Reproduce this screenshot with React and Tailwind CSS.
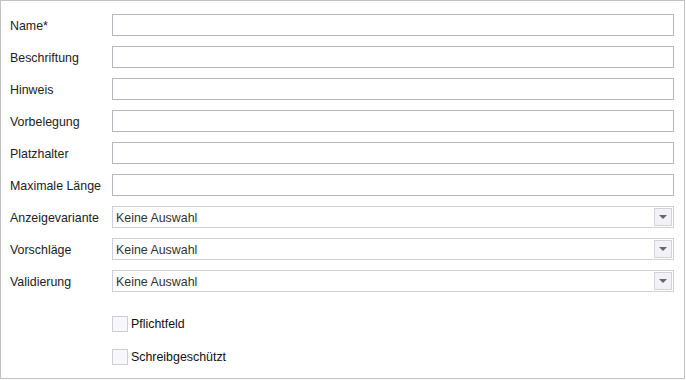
import React from 'react';

const textFields = ['Name*', 'Beschriftung', 'Hinweis', 'Vorbelegung', 'Platzhalter', 'Maximale Länge'];
const selectFields = ['Anzeigevariante', 'Vorschläge', 'Validierung'];

function Row({ label, children }) {
  return (
    <div className="flex items-center h-[22px] mb-[10px]">
      <label className="w-[102px] shrink-0 h-[22px] leading-[24px] text-[12.4px] text-[#222]">{label}</label>
      <div className="flex-1">{children}</div>
    </div>
  );
}

function SelectBox() {
  return (
    <div className="flex items-center h-[22px] border border-[#cfcfd6] bg-white pl-[3px] pr-[1px]">
      <span className="flex-1 h-[20px] text-[12.4px] leading-[22px] text-[#333]">Keine Auswahl</span>
      <div className="w-[18px] h-[18px] border border-[#d2d2da] bg-[#f1f1f6] flex items-center justify-center">
        <div className="w-0 h-0 border-l-[4px] border-r-[4px] border-t-[4px] border-l-transparent border-r-transparent border-t-[#666]" />
      </div>
    </div>
  );
}

function Check({ label }) {
  return (
    <div className="flex items-center h-[16px]">
      <div className="w-[16px] h-[16px] border border-[#cfcfdc] bg-[#f8f8fc] mr-[3px]" />
      <span className="text-[12.4px] text-[#111]">{label}</span>
    </div>
  );
}

export default function App() {
  return (
    <div className="w-[686px] h-[380px] bg-white" style={{ fontFamily: '"Liberation Sans", Arial, sans-serif' }}>
      <div className="w-[685px] h-[379px] border border-[#c2c2c2] pl-[9px] pr-[10px] pt-[13px]">
        {textFields.map((f) => (
          <Row key={f} label={f}>
            <input type="text" className="w-full h-[22px] border border-[#b6b6c2] bg-white outline-none" />
          </Row>
        ))}
        {selectFields.map((f) => (
          <Row key={f} label={f}>
            <SelectBox />
          </Row>
        ))}
        <div className="pl-[102px] pt-[14px] flex flex-col gap-[17px]">
          <Check label="Pflichtfeld" />
          <Check label="Schreibgeschützt" />
        </div>
      </div>
    </div>
  );
}
